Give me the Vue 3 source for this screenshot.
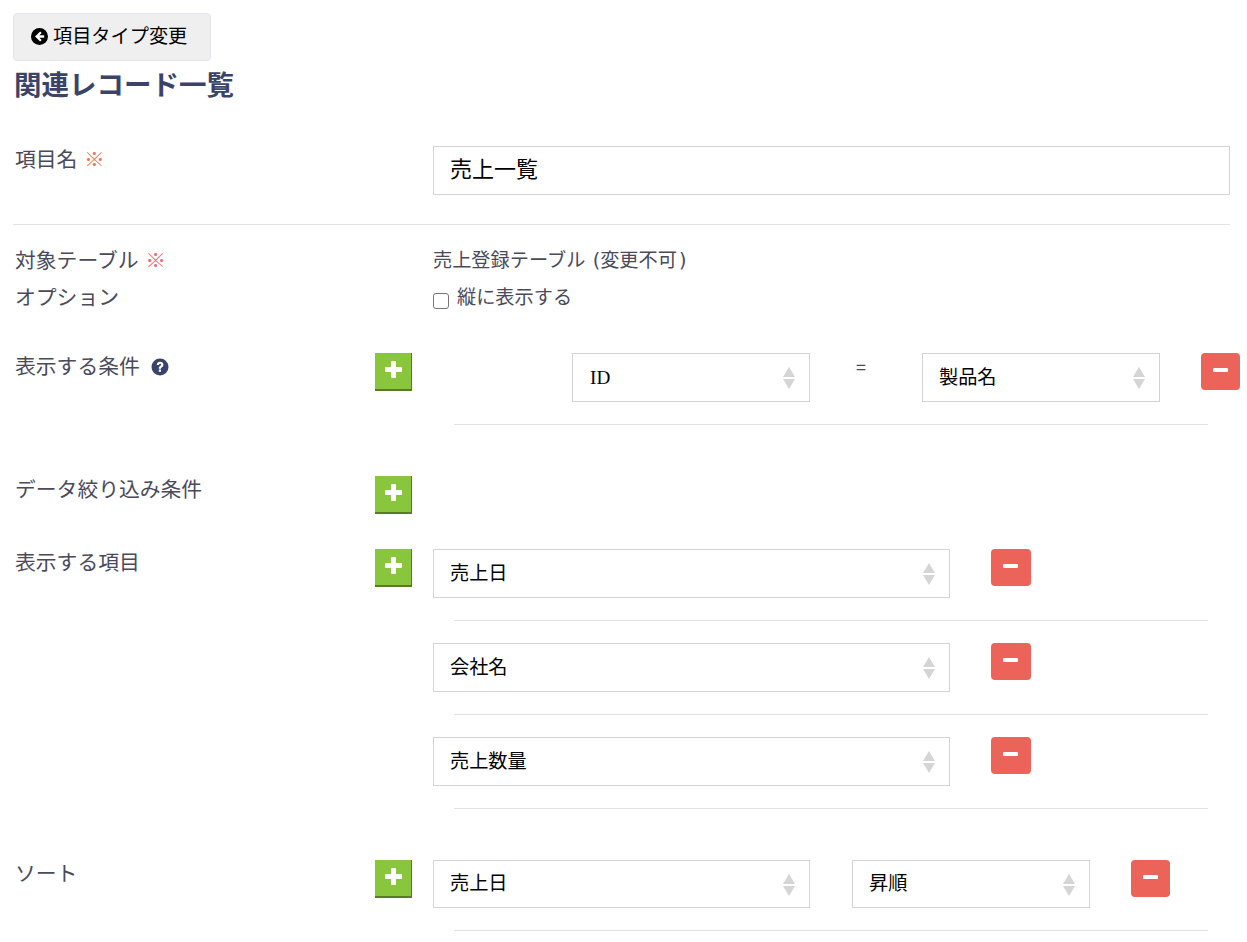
<script setup>
const shownItems = ['売上日', '会社名', '売上数量']
</script>

<template>
  <div class="page">
    <button class="back" type="button">
      <svg class="back-icon" viewBox="0 0 16 16" width="17" height="17" aria-hidden="true">
        <circle cx="8" cy="8" r="8" fill="#000" />
        <path d="M8.600 3.200 3.800 8l4.800 4.800 1.500-1.500-2.200-2.200h4.500V6.900H7.900l2.200-2.200z" fill="#fff" />
      </svg>
      <span>項目タイプ変更</span>
    </button>
    <h2 class="title">関連レコード一覧</h2>

    <div class="row name-row">
      <div class="label">項目名 <span class="req orange">※</span></div>
      <div class="span-body">
        <div class="input">売上一覧</div>
      </div>
    </div>
    <div class="rule"></div>

    <div class="row info-row">
      <div class="label">対象テーブル <span class="req">※</span></div>
      <div class="span-body info-text">売上登録テーブル <span class="wide-latin">(</span>変更不可<span class="wide-latin">)</span></div>
    </div>
    <div class="row option-row">
      <div class="label">オプション</div>
      <label class="span-body check info-text">
        <input type="checkbox" class="checkbox" />
        <span>縦に表示する</span>
      </label>
    </div>

    <div class="row cond-row">
      <div class="label">表示する条件
        <svg class="help" viewBox="0 0 18 18" width="18" height="18" aria-hidden="true">
          <circle cx="9" cy="9" r="8.5" fill="#3b4369" />
          <path d="M5.800 7C5.900 4.900 7.300 3.800 9.100 3.800s3.300 1.100 3.300 3c0 2.500-2.400 2.400-2.400 3.900H7.800c0-2.800 2.300-2.800 2.300-3.900 0-.6-.4-1-1-1s-1 .5-1.100 1.300zM7.800 11.500H10v2.300H7.800z" fill="#fff" />
        </svg>
      </div>
      <button class="btn plus" type="button"><span class="plus-h"></span><span class="plus-v"></span></button>
      <div class="body">
        <div class="line cond-line">
          <div class="select cond-select"><span class="latin">ID</span><i class="arrows"></i></div>
          <div class="eq">=</div>
          <div class="select cond-select">製品名<i class="arrows"></i></div>
          <button class="btn minus cond-minus" type="button"><span class="minus-bar"></span></button>
        </div>
        <div class="sub-rule"></div>
      </div>
    </div>

    <div class="row filter-row">
      <div class="label">データ絞り込み条件</div>
      <button class="btn plus" type="button"><span class="plus-h"></span><span class="plus-v"></span></button>
    </div>

    <div class="row items-row">
      <div class="label">表示する項目</div>
      <button class="btn plus" type="button"><span class="plus-h"></span><span class="plus-v"></span></button>
      <div class="body">
        <div v-for="item in shownItems" :key="item" class="item">
          <div class="line">
            <div class="select wide">{{ item }}<i class="arrows"></i></div>
            <button class="btn minus item-minus" type="button"><span class="minus-bar"></span></button>
          </div>
          <div class="sub-rule"></div>
        </div>
      </div>
    </div>

    <div class="row sort-row">
      <div class="label">ソート</div>
      <button class="btn plus" type="button"><span class="plus-h"></span><span class="plus-v"></span></button>
      <div class="body">
        <div class="line">
          <div class="select short sort-select">売上日<i class="arrows"></i></div>
          <div class="select short order-select">昇順<i class="arrows"></i></div>
          <button class="btn minus sort-minus" type="button"><span class="minus-bar"></span></button>
        </div>
        <div class="sub-rule"></div>
      </div>
    </div>
  </div>
</template>

<style scoped>
.page {
  width: 1247px;
  height: 942px;
  box-sizing: border-box;
  padding: 13px 0 0 13px;
  overflow: hidden;
  font-family: "Noto Sans CJK JP", "Noto Sans", sans-serif;
  color: #4a4a5a;
  background: #fff;
}
.back {
  display: flex;
  align-items: center;
  gap: 5px;
  width: 198px;
  height: 48px;
  box-sizing: border-box;
  padding: 0 0 5px 17px;
  background: #efefef;
  border: 1px solid #e3e3ee;
  border-radius: 4px;
  font: inherit;
  font-size: 19.2px;
  color: #000;
}
.back-icon { flex: none; margin-top: 3px; }
.title {
  margin: 2px 0 0 1px;
  font-size: 27.500px;
  line-height: 40px;
  font-weight: 700;
  color: #3b4369;
}
.row {
  display: grid;
  grid-template-columns: 360px 58px 797px;
  padding-left: 2px;
}
.label {
  font-size: 20.800px;
  line-height: 24px;
  white-space: nowrap;
}
.req { color: #ee6a78; margin-left: 2px; }
.req.orange { color: #e2785f; }
.span-body { grid-column: 2 / 4; padding-left: 58px; }
.name-row { margin-top: 43px; }
.input {
  height: 49px;
  box-sizing: border-box;
  padding: 0 16px;
  border: 1px solid #d3d3d3;
  font-size: 22px;
  line-height: 41px;
  color: #000;
}
.rule {
  height: 1px;
  width: 1217px;
  margin-top: 29px;
  background: #e2e2e2;
}
.info-row { margin-top: 22px; }
.info-text { font-size: 19.200px; line-height: 24px; word-spacing: 3px; }
.wide-latin { font-family: "DejaVu Sans", sans-serif; }
.wide-latin:last-child { margin-left: 2px; }
.option-row { margin-top: 11px; }
.check { display: flex; align-items: flex-start; gap: 8px; }
.checkbox {
  appearance: none;
  width: 16px;
  height: 16px;
  box-sizing: border-box;
  margin: 9px 0 0;
  flex: none;
  background: #fff;
  border: 1.500px solid #767676;
  border-radius: 3px;
}
.cond-row { margin-top: 44px; }
.body { min-width: 0; }
.line { display: flex; align-items: flex-start; }
.select {
  position: relative;
  height: 49px;
  box-sizing: border-box;
  padding: 0 16px;
  border: 1px solid #d3d3d3;
  font-size: 19.200px;
  line-height: 44px;
  color: #000;
  flex: none;
}
.select.short { height: 48px; line-height: 43px; }
.latin { font-family: "Liberation Serif", serif; margin-left: 1px; }
.arrows {
  position: absolute;
  right: 20px;
  top: 13px;
  width: 0;
  height: 22px;
}
.arrows::before,
.arrows::after {
  content: "";
  position: absolute;
  left: -6px;
  border-left: 6px solid transparent;
  border-right: 6px solid transparent;
}
.arrows::before { top: 0; border-bottom: 10px solid #d5d5d5; }
.arrows::after { top: 12px; border-top: 10px solid #d5d5d5; }
.cond-select { width: 238px; }
.cond-select:first-child { margin-left: 139px; }
.eq {
  flex: none;
  width: 112px;
  box-sizing: border-box;
  padding-right: 10px;
  text-align: center;
  font-size: 18px;
  line-height: 26px;
}
.wide { width: 517px; }
.sort-select { width: 377px; }
.order-select { width: 238px; margin-left: 42px; }
.btn {
  position: relative;
  display: block;
  padding: 0;
  border: 0;
  flex: none;
}
.plus {
  width: 37px;
  height: 38px;
  background: #8ac53e;
  box-shadow: inset -1px -2px 0 #567a26;
}
.plus-h, .plus-v {
  position: absolute;
  background: #fff;
  border-radius: 1px;
}
.plus-h { left: 10px; top: 14px; width: 17px; height: 5px; }
.plus-v { left: 16px; top: 8px; width: 5px; height: 17px; }
.minus {
  width: 39px;
  height: 37px;
  background: #ec6459;
  border-radius: 4px;
}
.minus-bar {
  position: absolute;
  left: 12px;
  top: 15px;
  width: 15px;
  height: 4px;
  background: #fff;
  border-radius: 1px;
}
.cond-minus { margin-left: 41px; }
.item-minus { margin-left: 41px; width: 40px; }
.sort-minus { margin-left: 41px; }
.help { margin-left: 7px; vertical-align: -2px; }
.sub-rule {
  width: 754px;
  height: 1px;
  margin: 22px 0 0 21px;
  background: #e2e2e2;
}
.filter-row { margin-top: 51px; }
.items-row { margin-top: 35px; }
.item { margin-bottom: 22px; }
.item:last-child { margin-bottom: 0; }
.sort-row { margin-top: 51px; }
</style>
